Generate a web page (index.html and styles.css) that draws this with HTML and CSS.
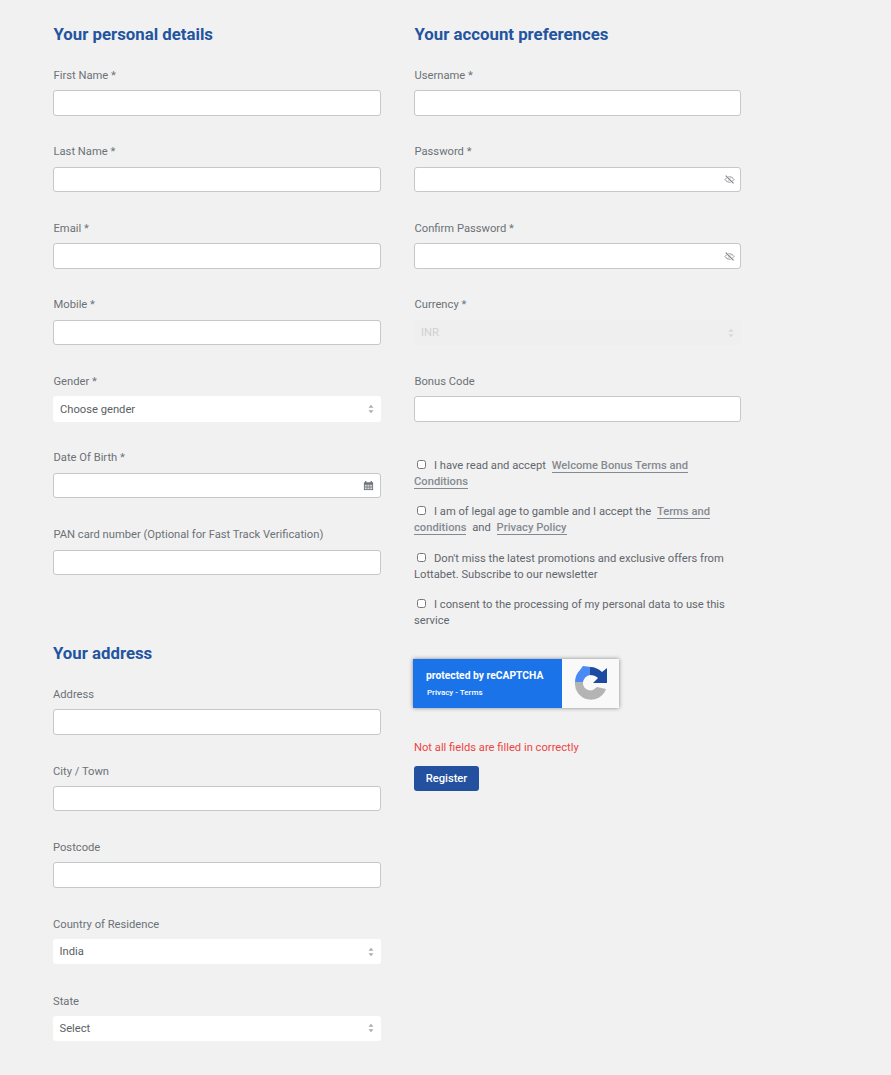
FILE: index.html
```html
<!DOCTYPE html>
<html lang="en">
<head>
<meta charset="utf-8">
<title>Register</title>
<link rel="stylesheet" href="styles.css">
</head>
<body>
<svg class="defs" width="0" height="0" aria-hidden="true">
  <symbol id="eye-off" viewBox="0 0 12 10">
    <path d="M1 5c1.400-2 3-3 5-3s3.600 1 5 3c-1.400 2-3 3-5 3S2.400 7 1 5z" fill="none" stroke="#92959a" stroke-width="1.100"/>
    <circle cx="6" cy="5" r="1.500" fill="#92959a"/>
    <path d="M1.800 .6l8.700 8.800" stroke="#fff" stroke-width="2.200"/>
    <path d="M1.800 .6l8.700 8.800" stroke="#7f8287" stroke-width="1.200"/>
  </symbol>
  <symbol id="updown" viewBox="0 0 8 12">
    <path d="M4 1l3 3.500H1zM4 11L1 7.500h6z" fill="#a9acb0"/>
  </symbol>
</svg>
<main class="page">
  <div class="col col-left">
    <section class="group">
      <h2 class="heading">Your personal details</h2>
      <div class="field"><label class="label">First Name *</label><div class="input"></div></div>
      <div class="field"><label class="label">Last Name *</label><div class="input"></div></div>
      <div class="field"><label class="label">Email *</label><div class="input"></div></div>
      <div class="field"><label class="label">Mobile *</label><div class="input"></div></div>
      <div class="field"><label class="label">Gender *</label><div class="select"><span>Choose gender</span><svg class="arrows"><use href="#updown"/></svg></div></div>
      <div class="field"><label class="label">Date Of Birth *</label><div class="input icon-input">
        <svg class="cal" viewBox="0 0 12 12"><path d="M1 2.500h10v8.500H1z" fill="#6d7278"/><path d="M3 1v2.500M9 1v2.500" stroke="#6d7278" stroke-width="1.400"/><path d="M2 5.200h8v4.800H2z" fill="#e8e9ea"/><path d="M2 6.800h8M2 8.400h8M4.500 5v5M7.300 5v5" stroke="#6d7278" stroke-width=".7"/></svg>
      </div></div>
      <div class="field"><label class="label">PAN card number (Optional for Fast Track Verification)</label><div class="input"></div></div>
    </section>
    <section class="group group-address">
      <h2 class="heading">Your address</h2>
      <div class="field"><label class="label">Address</label><div class="input"></div></div>
      <div class="field"><label class="label">City / Town</label><div class="input"></div></div>
      <div class="field"><label class="label">Postcode</label><div class="input"></div></div>
      <div class="field"><label class="label">Country of Residence</label><div class="select"><span>India</span><svg class="arrows"><use href="#updown"/></svg></div></div>
      <div class="field"><label class="label">State</label><div class="select"><span>Select</span><svg class="arrows"><use href="#updown"/></svg></div></div>
    </section>
  </div>
  <div class="col col-right">
    <section class="group">
      <h2 class="heading">Your account preferences</h2>
      <div class="field"><label class="label">Username *</label><div class="input"></div></div>
      <div class="field"><label class="label">Password *</label><div class="input icon-input"><svg class="eye"><use href="#eye-off"/></svg></div></div>
      <div class="field"><label class="label">Confirm Password *</label><div class="input icon-input"><svg class="eye"><use href="#eye-off"/></svg></div></div>
      <div class="field"><label class="label">Currency *</label><div class="select select-disabled"><span>INR</span><svg class="arrows"><use href="#updown"/></svg></div></div>
      <div class="field"><label class="label">Bonus Code</label><div class="input"></div></div>
    </section>
    <div class="checks">
      <p class="check"><input type="checkbox" class="box">I have read and accept <a class="link">Welcome Bonus Terms and Conditions</a></p>
      <p class="check"><input type="checkbox" class="box">I am of legal age to gamble and I accept the <a class="link">Terms and conditions</a> and <a class="link">Privacy Policy</a></p>
      <p class="check"><input type="checkbox" class="box">Don't miss the latest promotions and exclusive offers from Lottabet. Subscribe to our newsletter</p>
      <p class="check"><input type="checkbox" class="box">I consent to the processing of my personal data to use this service</p>
    </div>
    <div class="recaptcha">
      <div class="rc-text">
        <div class="rc-title">protected by reCAPTCHA</div>
        <div class="rc-links">Privacy - Terms</div>
      </div>
      <div class="rc-logo">
        <svg viewBox="0 0 34 34" width="34" height="34">
          <path d="M1 16H9A7.500 7.500 0 0 0 19 24L23 21L32 23A16 16 0 0 1 1 16Z" fill="#b4b4b4"/>
          <path d="M1 16C1 11 3 7 6 4L9 0L17 1V9C13 9 10 12 9 16Z" fill="#4a8af4"/>
          <path d="M16 1C21 1 25 3 28 6L33 2V17H19L24 12C22 10 19 9 16 9Z" fill="#1c4aa3"/>
        </svg>
      </div>
    </div>
    <p class="error">Not all fields are filled in correctly</p>
    <button class="submit" type="button">Register</button>
  </div>
</main>
</body>
</html>
```
FILE: styles.css
```css
* { box-sizing: border-box; }
html, body { margin: 0; padding: 0; }
body {
  background: #f1f1f1;
  font-family: Roboto, "Liberation Sans", sans-serif;
  font-size: 11.200px;
  color: #5d6369;
  height: 1075px;
  overflow: hidden;
}
.defs { position: absolute; }
.page {
  display: flex;
  align-items: flex-start;
  padding: 24px 0 0 53px;
  gap: 33.500px;
}
.col { width: 327.500px; display: flex; flex-direction: column; }
.col-right { width: 327px; }
.group-address { margin-top: 39px; margin-left: -.5px; }
.heading {
  margin: 0 0 23.500px;
  padding-left: .5px;
  font-size: 16.800px;
  line-height: 20px;
  font-weight: 700;
  color: #23549f;
}
.group-address .heading { margin-bottom: 24.500px; }
.group-address .label { margin-bottom: 7px; }
.field { height: 76.600px; }
.label {
  display: block;
  height: 15px;
  line-height: 15px;
  margin-bottom: 7.500px;
  padding-left: .5px;
  font-size: 11.200px;
  color: #6c7177;
}
.input, .select {
  width: 100%;
  height: 25.500px;
  border-radius: 3px;
  background: #fff;
  display: flex;
  align-items: center;
}
.input {
  border: 1px solid #c6c7c9;
}
.icon-input { justify-content: flex-end; padding-right: 4px; }
.select {
  justify-content: space-between;
  padding: 0 6px 0 7px;
  font-size: 11.200px;
  color: #5a5f65;
}
.select-disabled { background: #efefef; color: #d0d1d2; }
.select-disabled .arrows { opacity: .35; }
.arrows { width: 8px; height: 10px; }
.eye { width: 11px; height: 9px; margin-right: 1px; margin-top: 1px; }
.cal { width: 11px; height: 11px; margin-right: 2px; }
.checks { margin-top: 7.500px; display: flex; flex-direction: column; gap: 14.500px; }
.check {
  margin: 0;
  line-height: 16px;
  font-size: 11.200px;
  color: #62676d;
}
.box {
  width: 9px;
  height: 9px;
  margin: 0 8px 0 3px;
  vertical-align: 0;
  accent-color: #fff;
}
.link {
  font-weight: 500;
  margin: 0 3px;
  color: #858a90;
  border-bottom: 1px solid #858a90;
}
.check .link:last-child { margin-right: 0; }
.recaptcha {
  margin-top: 29.500px;
  margin-left: -1px;
  width: 206px;
  height: 49px;
  display: flex;
  box-shadow: 0 0 4px rgba(0, 0, 0, .45);
}
.rc-text {
  width: 149px;
  background: #1a73e8;
  color: #fff;
  padding: 10px 0 0 13px;
}
.rc-title { font-size: 10.300px; font-weight: 700; line-height: 13px; }
.rc-links { font-size: 8px; font-weight: 500; margin: 6px 0 0 1px; line-height: 10px; }
.rc-logo {
  flex: 1;
  background: #f9f9f9;
  display: flex;
  align-items: center;
  justify-content: center;
}
.error {
  margin: 33px 0 0;
  font-size: 11.200px;
  line-height: 14px;
  color: #ef4444;
}
.submit {
  margin-top: 11px;
  width: 65px;
  height: 25px;
  border: 0;
  border-radius: 3px;
  background: #23509f;
  color: #fff;
  font: 500 11.200px Roboto, sans-serif;
  padding: 0;
}
```
